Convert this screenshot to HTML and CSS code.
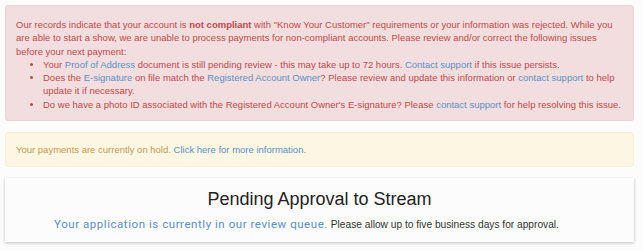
FILE: index.html
```html
<!DOCTYPE html>
<html lang="en">

<head>
    <meta charset="UTF-8">
    <meta name="viewport" content="width=device-width, initial-scale=1.0">
    <title>Account Status</title>
    <link rel="stylesheet" href="styles.css">
</head>

<body>
    <div class="page">
        <div class="alert alert-danger">
            <p>Our records indicate that your account is <strong>not compliant</strong> with "Know Your Customer" requirements or your information was rejected. While you are able to start a show, we are unable to process payments for non-compliant accounts. Please review and/or correct the following issues before your next payment:</p>
            <ul>
                <li>Your <a href="#">Proof of Address</a> document is still pending review - this may take up to 72 hours. <a href="#">Contact support</a> if this issue persists.</li>
                <li>Does the <a href="#">E-signature</a> on file match the <a href="#">Registered Account Owner</a>? Please review and update this information or <a href="#">contact support</a> to help update it if necessary.</li>
                <li>Do we have a photo ID associated with the Registered Account Owner's E-signature? Please <a href="#">contact support</a> for help resolving this issue.</li>
            </ul>
        </div>

        <div class="alert alert-warning">
            Your payments are currently on hold. <a href="#">Click here for more information.</a>
        </div>

        <div class="status-card">
            <h2>Pending Approval to Stream</h2>
            <p><span class="queue-note">Your application is currently in our review queue.</span> Please allow up to five business days for approval.</p>
        </div>
    </div>
</body>

</html>
```

FILE: styles.css
```css
/* Page layout */
body {
    margin: 0;
    background-color: #fcfcfc;
    font-family: "Liberation Sans", Arial, sans-serif;
    font-size: 9.5px;
}

.page {
    display: flex;
    flex-direction: column;
    gap: 11px;
    padding: 5px 9px 8px 5px;
}

a {
    color: #5b8fc7;
    text-decoration: none;
}

/* Alerts */
.alert {
    border: 1px solid transparent;
    border-radius: 3px;
    padding: 0 10px;
    line-height: 13.3px;
}

.alert-danger {
    background-color: #f2dede;
    border-color: #ecd3d6;
    color: #c0484a;
    padding-top: 12px;
    padding-bottom: 9px;
}

.alert-danger p {
    margin: 0;
}

.alert-danger ul {
    margin: 0;
    padding-left: 27px;
}

.alert-warning {
    background-color: #fcf6e3;
    border-color: #faefd6;
    color: #c29a4e;
    padding-top: 10px;
    padding-bottom: 10px;
}

/* Status card */
.status-card {
    background-color: #fcfcfc;
    box-shadow: 0 1px 3px rgba(0, 0, 0, 0.25);
    text-align: center;
    padding: 9px 10px 9px;
}

.status-card h2 {
    margin: 0 0 5px;
    font-size: 18px;
    line-height: 24px;
    font-weight: normal;
    color: #222;
}

.status-card p {
    margin: 0;
    padding-right: 26px;
    font-size: 10.2px;
    line-height: 16px;
    color: #333;
}

.queue-note {
    font-family: Roboto, "Liberation Sans", sans-serif;
    font-size: 11.5px;
    letter-spacing: 0.55px;
    color: #5b8fc7;
}
```
